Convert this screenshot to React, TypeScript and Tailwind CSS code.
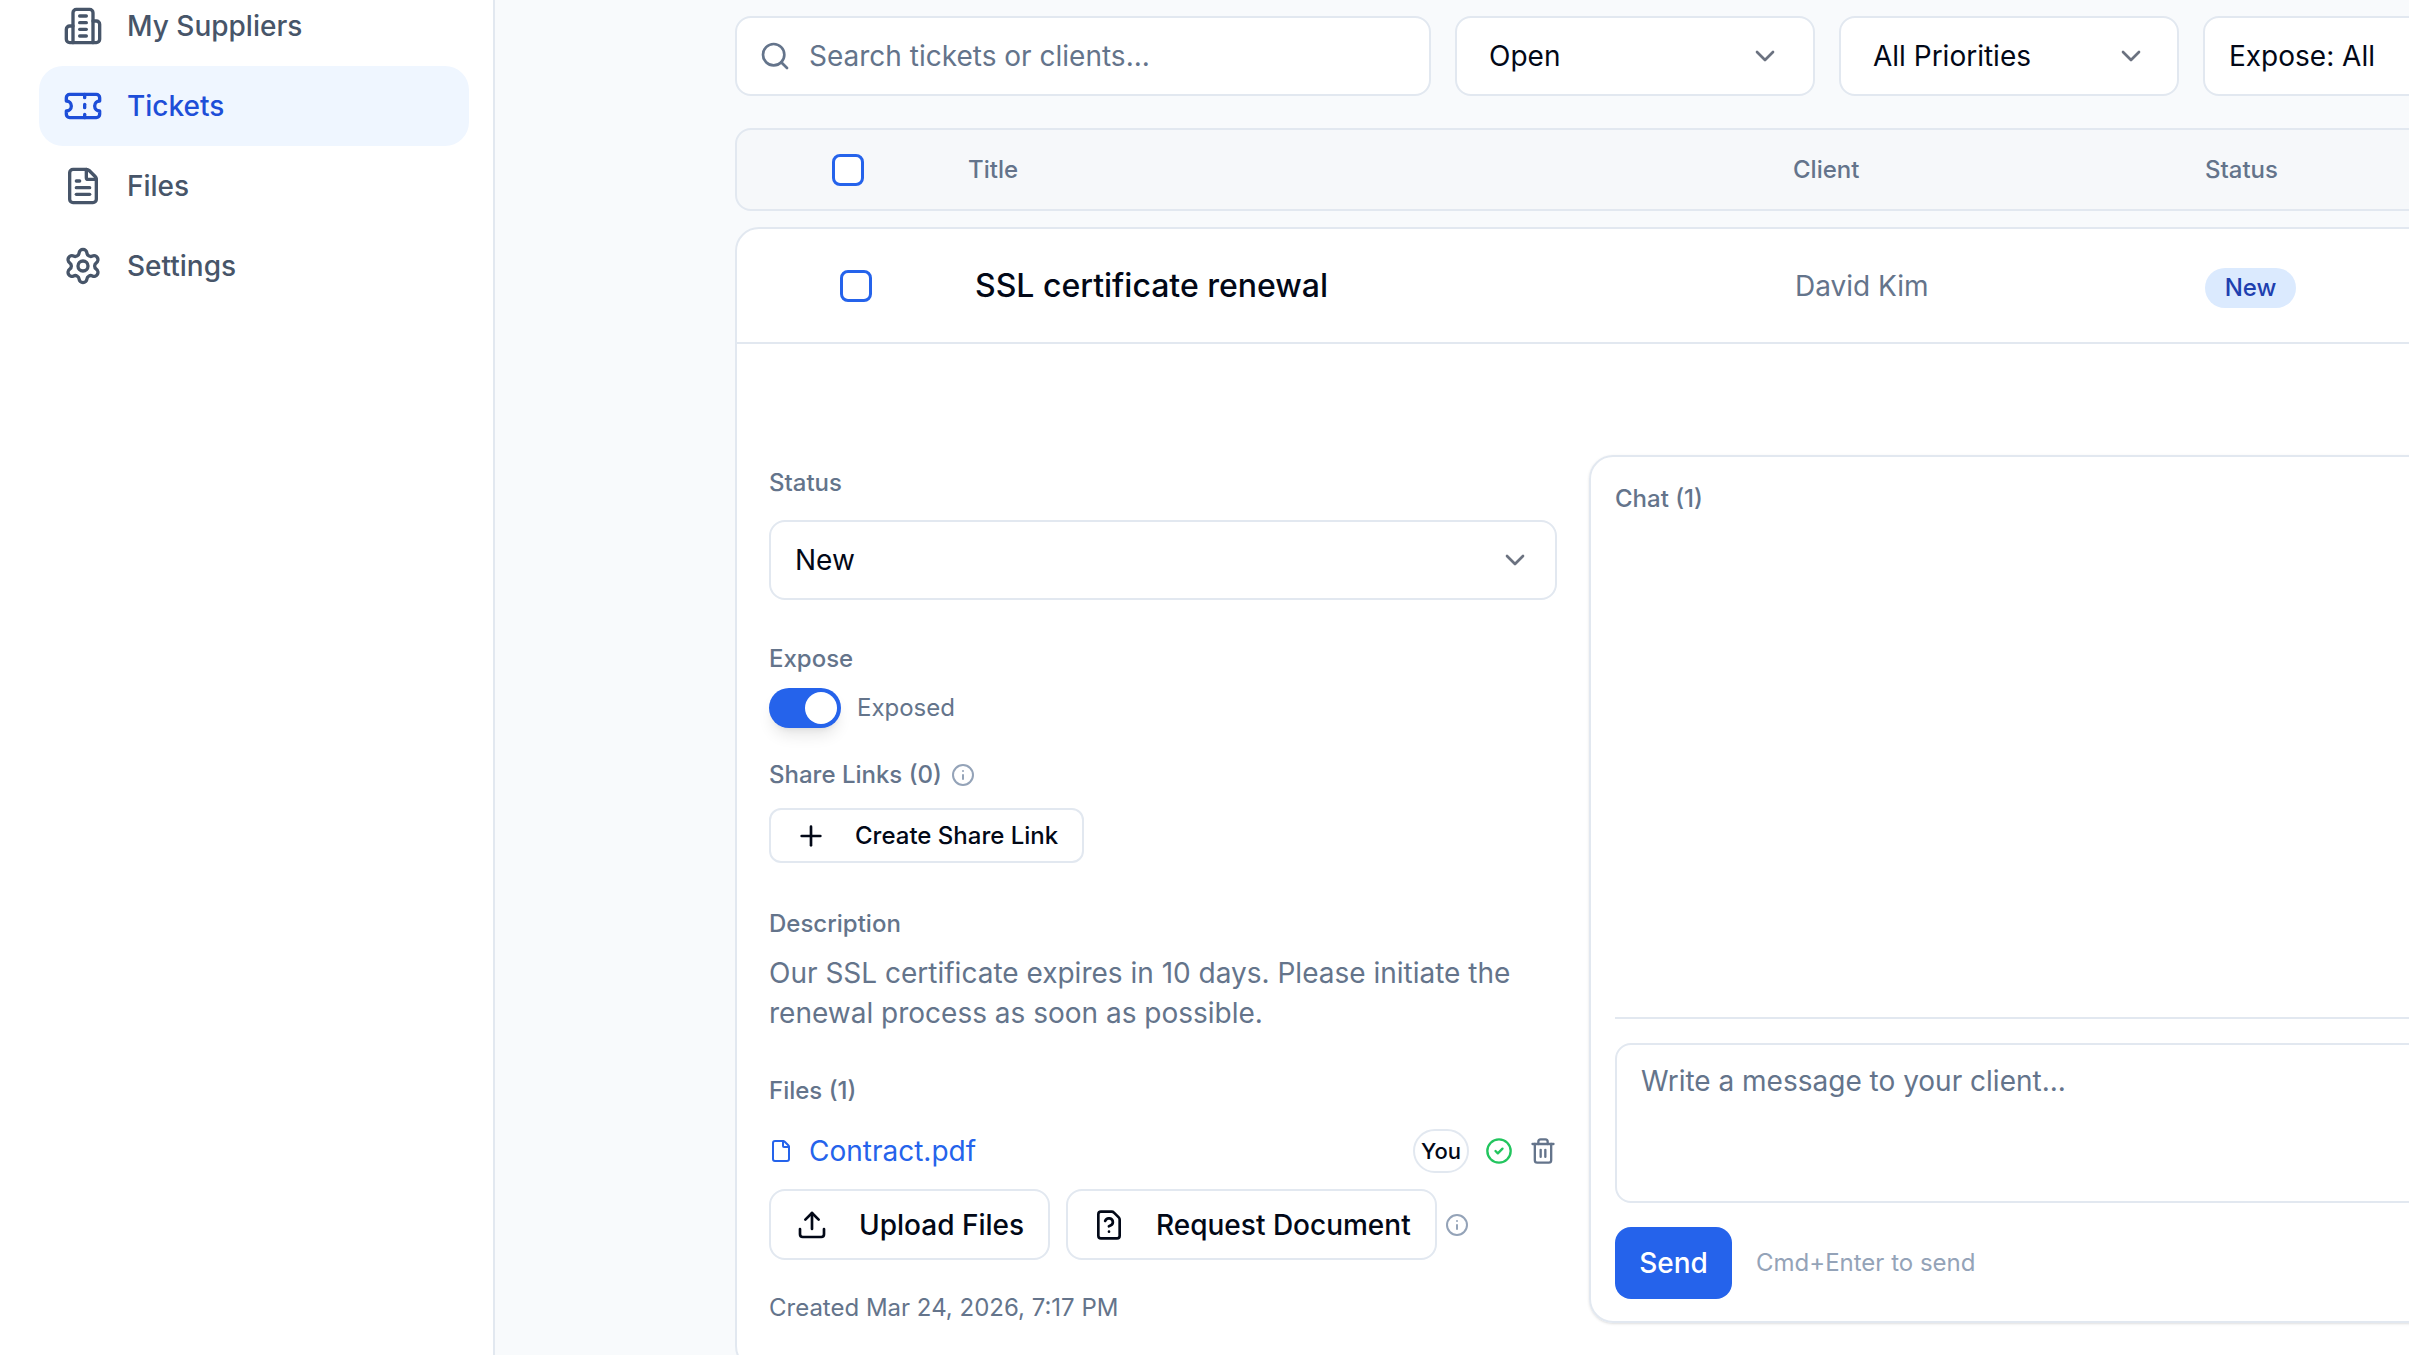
import {
  ChevronDown,
  CircleCheck,
  File,
  FileQuestion,
  FileText,
  Info,
  Plus,
  Search,
  Settings,
  Ticket,
  Trash2,
  Upload,
} from "lucide-react";

const Building = () => (
  <svg
    width="40"
    height="40"
    viewBox="0 0 24 24"
    fill="none"
    stroke="currentColor"
    strokeWidth="2"
    strokeLinecap="round"
    strokeLinejoin="round"
  >
    <path d="M6 22V4a2 2 0 0 1 2-2h8a2 2 0 0 1 2 2v18Z" />
    <path d="M6 12H4a2 2 0 0 0-2 2v6a2 2 0 0 0 2 2h2" />
    <path d="M18 9h2a2 2 0 0 1 2 2v9a2 2 0 0 1-2 2h-2" />
    <path d="M10 6h4" />
    <path d="M10 10h4" />
    <path d="M10 14h4" />
    <path d="M10 18h4" />
  </svg>
);

const Sidebar = () => {
  return (
    <aside className="w-[495px] shrink-0 border-r-[2px] border-[#e2e8f0] bg-white">
      <nav className="-mt-[14px] pl-[39px] pr-[24px] text-[28px] font-medium text-[#475569]">
        <div className="flex h-[80px] items-center gap-[24px] px-[24px]">
          <Building />
          My Suppliers
        </div>
        <div className="flex h-[80px] items-center gap-[24px] rounded-[24px] bg-[#eff6ff] px-[24px] text-[#1d4ed8]">
          <Ticket size={40} />
          Tickets
        </div>
        <div className="flex h-[80px] items-center gap-[24px] px-[24px]">
          <FileText size={40} />
          Files
        </div>
        <div className="flex h-[80px] items-center gap-[24px] px-[24px]">
          <Settings size={40} />
          Settings
        </div>
      </nav>
    </aside>
  );
};

const Filters = () => {
  return (
    <div className="flex gap-[24px] text-[28px] text-[#020817]">
      <div className="flex h-[80px] w-[696px] items-center gap-[18px] rounded-[16px] border-[2px] border-[#e2e8f0] bg-white pl-[22px]">
        <Search size={32} className="text-[#64748b]" />
        <input
          className="w-[500px] bg-transparent outline-none placeholder:text-[#64748b]"
          placeholder="Search tickets or clients..."
        />
      </div>
      <div className="flex h-[80px] w-[360px] items-center justify-between rounded-[16px] border-[2px] border-[#e2e8f0] bg-white pl-[32px] pr-[32px]">
        Open
        <ChevronDown size={32} className="text-[#6b7280]" />
      </div>
      <div className="flex h-[80px] w-[340px] items-center justify-between rounded-[16px] border-[2px] border-[#e2e8f0] bg-white pl-[32px] pr-[30px]">
        All Priorities
        <ChevronDown size={32} className="text-[#6b7280]" />
      </div>
      <div className="flex h-[80px] w-[360px] items-center rounded-[16px] border-[2px] border-[#e2e8f0] bg-white pl-[24px]">
        Expose: All
      </div>
    </div>
  );
};

const Details = () => {
  return (
    <div className="w-[788px] shrink-0 pt-[8px]">
      <div className="h-[40px] text-[24px] font-medium leading-[40px] text-[#64748b]">Status</div>
      <div className="mt-[17px] flex h-[80px] items-center justify-between rounded-[16px] border-[2px] border-[#e2e8f0] pl-[24px] pr-[24px] text-[28px] text-[#020817]">
        New
        <ChevronDown size={32} className="text-[#6b7280]" />
      </div>
      <div className="mt-[39px] h-[40px] text-[24px] font-medium leading-[40px] text-[#64748b]">Expose</div>
      <div className="mt-[9px] flex h-[40px] items-center gap-[16px]">
        <div className="flex h-[40px] w-[72px] items-center justify-end rounded-full bg-[#2563eb] pr-[4px] shadow-lg">
          <div className="h-[32px] w-[32px] rounded-full bg-white" />
        </div>
        <span className="text-[24px] text-[#64748b]">Exposed</span>
      </div>
      <div className="mt-[27px] flex h-[40px] items-center gap-[9px] text-[24px] font-medium text-[#64748b]">
        Share Links (0)
        <Info size={24} className="text-[#94a3b8]" />
      </div>
      <button className="mt-[13px] flex h-[55px] w-[315px] items-center gap-[28px] rounded-[12px] border-[2px] border-[#e2e8f0] pl-[24px] text-[24px] font-medium text-[#020817]">
        <Plus size={32} />
        Create Share Link
      </button>
      <div className="mt-[41px] h-[40px] text-[24px] font-medium leading-[40px] text-[#64748b]">Description</div>
      <p className="mt-[9px] text-[28px] leading-[40px] text-[#64748b]">
        Our SSL certificate expires in 10 days. Please initiate the
        <br />
        renewal process as soon as possible.
      </p>
      <div className="mt-[38px] h-[40px] text-[24px] font-medium leading-[40px] text-[#64748b]">Files (1)</div>
      <div className="mt-[18px] flex h-[44px] items-center">
        <File size={24} className="text-[#2563eb]" />
        <span className="ml-[16px] text-[28px] text-[#2563eb]">Contract.pdf</span>
        <span className="ml-auto flex h-[44px] w-[56px] items-center justify-center rounded-full border-[2px] border-[#e2e8f0] text-[22px] font-medium text-[#020817]">
          You
        </span>
        <CircleCheck size={28} className="ml-[16px] text-[#22c55e]" />
        <Trash2 size={28} className="ml-[16px] text-[#64748b]" />
      </div>
      <div className="mt-[16px] flex h-[71px] items-center text-[28px] font-medium text-[#020817]">
        <button className="flex h-[71px] w-[281px] items-center gap-[31px] rounded-[16px] border-[2px] border-[#e2e8f0] pl-[25px]">
          <Upload size={32} />
          Upload Files
        </button>
        <button className="ml-[16px] flex h-[71px] w-[371px] items-center gap-[31px] rounded-[16px] border-[2px] border-[#e2e8f0] pl-[25px]">
          <FileQuestion size={32} />
          Request Document
        </button>
        <Info size={24} className="ml-[8px] text-[#94a3b8]" />
      </div>
      <div className="mt-[28px] h-[40px] text-[24px] leading-[40px] text-[#64748b]">
        Created Mar 24, 2026, 7:17 PM
      </div>
    </div>
  );
};

const Chat = () => {
  return (
    <div className="flex h-[868px] w-[1100px] shrink-0 flex-col rounded-[24px] border-[2px] border-[#e2e8f0] px-[24px] pb-[22px] pt-[22px] shadow-sm">
      <div className="h-[40px] text-[24px] font-medium leading-[40px] text-[#64748b]">Chat (1)</div>
      <div className="flex-1 border-b-[2px] border-[#e2e8f0]" />
      <textarea
        className="mt-[24px] h-[160px] resize-none rounded-[16px] border-[2px] border-[#e2e8f0] px-[24px] py-[16px] text-[28px] leading-[40px] outline-none placeholder:text-[#64748b]"
        placeholder="Write a message to your client..."
      />
      <div className="mt-[24px] flex items-center gap-[24px]">
        <button className="h-[72px] w-[117px] rounded-[16px] bg-[#2563eb] text-[28px] font-medium text-white">Send</button>
        <span className="text-[24px] text-[#94a3b8]">Cmd+Enter to send</span>
      </div>
    </div>
  );
};

const App = () => {
  return (
    <div className="flex h-[1355px] w-[2409px] overflow-hidden bg-[#f8fafc] font-['Inter',sans-serif]">
      <Sidebar />
      <main className="w-[2200px] shrink-0 pl-[240px] pt-[16px]">
        <Filters />
        <div className="mt-[32px] flex h-[83px] items-center rounded-[16px] border-[2px] border-[#e2e8f0] bg-[#f6f8fa] pl-[95px] text-[24px] font-medium text-[#64748b]">
          <div className="h-[32px] w-[32px] rounded-[8px] border-[3px] border-[#2563eb] bg-white" />
          <div className="ml-[104px] w-[825px]">Title</div>
          <div className="w-[412px]">Client</div>
          <div>Status</div>
        </div>
        <div className="mt-[16px] rounded-[24px] border-[2px] border-[#e2e8f0] bg-white">
          <div className="flex h-[115px] items-center border-b-[2px] border-[#e2e8f0] pl-[103px]">
            <div className="h-[32px] w-[32px] rounded-[8px] border-[3px] border-[#2563eb] bg-white" />
            <div className="ml-[103px] w-[820px] text-[32px] font-medium text-[#020817]">SSL certificate renewal</div>
            <div className="w-[410px] text-[28px] text-[#64748b]">David Kim</div>
            <span className="mt-[5px] flex h-[40px] w-[91px] items-center justify-center rounded-full bg-[#dbeafe] text-[24px] font-medium text-[#1e40af]">
              New
            </span>
          </div>
          <div className="flex gap-[32px] pb-[40px] pl-[32px] pt-[111px]">
            <Details />
            <Chat />
          </div>
        </div>
      </main>
    </div>
  );
};

export default App;
